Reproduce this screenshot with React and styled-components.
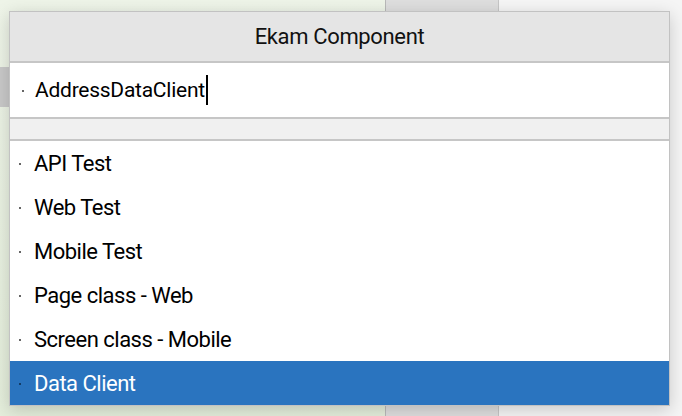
import styled, { createGlobalStyle } from "styled-components";

const GlobalStyle = createGlobalStyle`
	html, body {
		margin: 0;
		padding: 0;
		width: 682px;
		height: 416px;
		overflow: hidden;
		font-family: Roboto, "Liberation Sans", Arial, sans-serif;
	}
`;

const Desktop = styled.div`
	position: relative;
	display: flex;
	width: 682px;
	height: 416px;
	background: #f7f7f7;
`;

const EditorPane = styled.div`
	width: 385px;
	background: linear-gradient(180deg, #eef4e8 0%, #e4eedb 100%);
	border-right: 1px solid #b9b9b9;
`;

const SideStripe = styled.div`
	margin-top: 67px;
	width: 10px;
	height: 40px;
	background: #c9c9c9;
`;

const GutterPane = styled.div`
	width: 112px;
	background: #dedede;
	border-right: 1px solid #c6c6c6;
`;

const RestPane = styled.div`
	flex: 1;
	background: #f5f5f5;
`;

const Dialog = styled.div`
	position: absolute;
	left: 9px;
	top: 11px;
	width: 661px;
	display: flex;
	flex-direction: column;
	background: #fff;
	border: 1px solid #c2c2c2;
	box-sizing: border-box;
	box-shadow: 0 4px 16px rgba(0, 0, 0, 0.18);
`;

const Header = styled.div`
	height: 49px;
	display: flex;
	align-items: center;
	justify-content: center;
	background: #e5e5e5;
	border-bottom: 2px solid #c6c6c6;
	font-size: 22px;
	letter-spacing: -0.35px;
	color: #111;
`;

const InputRow = styled.div`
	height: 54px;
	display: flex;
	align-items: center;
	padding-left: 12px;
	border-bottom: 2px solid #c6c6c6;
	font-size: 21px;
	letter-spacing: -0.25px;
	color: #000;
`;

const Caret = styled.span`
	display: inline-block;
	width: 2px;
	height: 30px;
	background: #000;
	margin-left: 1px;
`;

const Spacer = styled.div`
	height: 20px;
	background: #f0f0f0;
	border-bottom: 2px solid #c6c6c6;
`;

const List = styled.div`
	display: flex;
	flex-direction: column;
`;

const Item = styled.div`
	height: 44px;
	display: flex;
	align-items: center;
	padding-left: 9px;
	font-size: 22px;
	letter-spacing: -0.5px;
	background: ${(p) => (p.$selected ? "#2a74bf" : "#fff")};
	color: ${(p) => (p.$selected ? "#fff" : "#000")};
`;

const Dot = styled.span`
	display: inline-block;
	width: 2px;
	height: 2px;
	border-radius: 1px;
	background: ${(p) => (p.$light ? "#0b2a4a" : "#333")};
	margin-right: ${(p) => p.$gap || 13}px;
	margin-top: 2px;
`;

const items = [
	"API Test",
	"Web Test",
	"Mobile Test",
	"Page class - Web",
	"Screen class - Mobile",
	"Data Client",
];

export default function App() {
	return (
		<>
			<GlobalStyle />
			<Desktop>
				<EditorPane>
					<SideStripe />
				</EditorPane>
				<GutterPane />
				<RestPane />
				<Dialog>
					<Header>Ekam Component</Header>
					<InputRow>
						<Dot $gap={11} />
						AddressDataClient
						<Caret />
					</InputRow>
					<Spacer />
					<List>
						{items.map((it, i) => (
							<Item key={it} $selected={i === items.length - 1}>
								<Dot $light={i === items.length - 1} />
								{it}
							</Item>
						))}
					</List>
				</Dialog>
			</Desktop>
		</>
	);
}
